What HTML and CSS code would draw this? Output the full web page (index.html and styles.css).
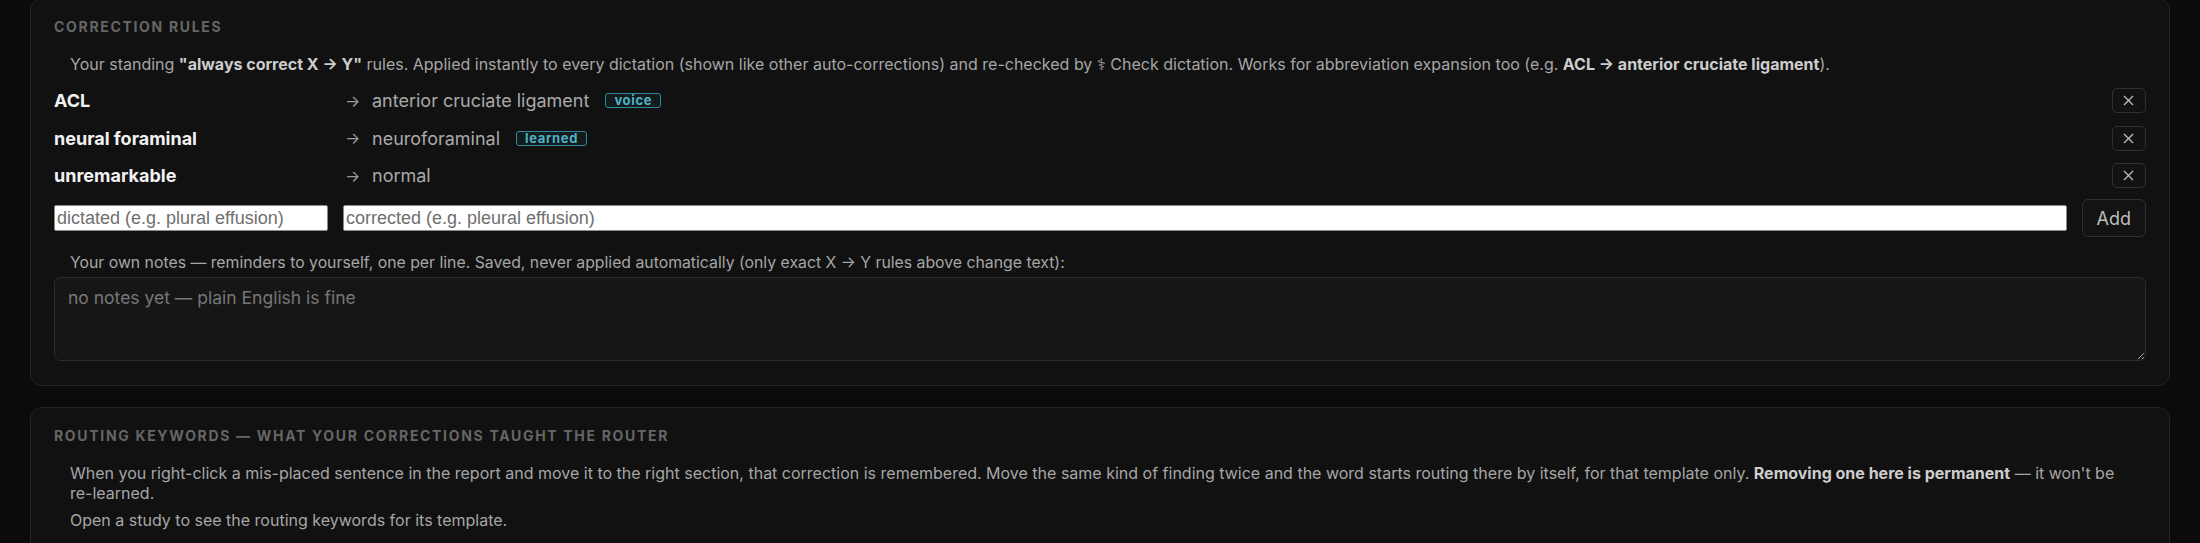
FILE: index.html
```html
<!DOCTYPE html>
<html lang="en">
<head>
<meta charset="utf-8">
<title>Correction rules</title>
<link rel="stylesheet" href="styles.css">
</head>
<body>
<div class="page">
  <section class="card">
    <h2 class="card-title">Correction rules</h2>
    <p class="hint hint-intro">Your standing <b>"always correct X → Y"</b> rules. Applied instantly to every dictation (shown like other auto-corrections) and re-checked by ⚕ Check dictation. Works for abbreviation expansion too (e.g. <b>ACL → anterior cruciate ligament</b>).</p>
    <div class="rules">
      <div class="rule">
        <span class="src">ACL</span>
        <span class="arrow">→</span>
        <span class="dst">anterior cruciate ligament <span class="badge">voice</span></span>
        <button class="del" aria-label="Remove"><svg viewBox="0 0 11 11" width="11" height="11"><path d="M1 1L10 10M10 1L1 10"/></svg></button>
      </div>
      <div class="rule">
        <span class="src">neural foraminal</span>
        <span class="arrow">→</span>
        <span class="dst">neuroforaminal <span class="badge">learned</span></span>
        <button class="del" aria-label="Remove"><svg viewBox="0 0 11 11" width="11" height="11"><path d="M1 1L10 10M10 1L1 10"/></svg></button>
      </div>
      <div class="rule">
        <span class="src">unremarkable</span>
        <span class="arrow">→</span>
        <span class="dst">normal</span>
        <button class="del" aria-label="Remove"><svg viewBox="0 0 11 11" width="11" height="11"><path d="M1 1L10 10M10 1L1 10"/></svg></button>
      </div>
    </div>
    <div class="add-row">
      <input class="field field-src" type="text" placeholder="dictated (e.g. plural effusion)">
      <input class="field field-dst" type="text" placeholder="corrected (e.g. pleural effusion)">
      <button class="add">Add</button>
    </div>
    <p class="hint notes-label">Your own notes — reminders to yourself, one per line. Saved, never applied automatically (only exact X → Y rules above change text):</p>
    <textarea class="notes" placeholder="no notes yet — plain English is fine"></textarea>
  </section>

  <section class="card">
    <h2 class="card-title">Routing keywords — what your corrections taught the router</h2>
    <p class="hint">When you right-click a mis-placed sentence in the report and move it to the right section, that correction is remembered. Move the same kind of finding twice and the word starts routing there by itself, for that template only. <b>Removing one here is permanent</b> — it won't be re-learned.</p>
    <p class="hint">Open a study to see the routing keywords for its template.</p>
  </section>
</div>
</body>
</html>
```

FILE: styles.css
```css
* { box-sizing: border-box; }

html, body {
  margin: 0;
  padding: 0;
  background: #0b0b0b;
  font-family: Inter, "Liberation Sans", sans-serif;
  color: #a8a8a8;
  overflow: hidden;
}

.page {
  padding: 0 30px;
  margin-top: -2px;
}

.card {
  background: #111111;
  border: 1px solid #242424;
  border-radius: 12px;
  padding: 20px 23px 24px;
}

.card + .card {
  margin-top: 21px;
}

.card-title {
  margin: 0 0 19px;
  font-size: 14px;
  line-height: 16px;
  font-weight: 700;
  letter-spacing: 0.12em;
  text-transform: uppercase;
  color: #666666;
}

.hint {
  margin: 0 16px 7px;
  font-size: 16px;
  line-height: 20px;
  color: #a6a6a6;
}

.hint b {
  font-weight: 700;
  color: #cdcdcd;
}

.hint-intro {
  margin-bottom: 14px;
}

.rules {
  display: grid;
  row-gap: 12.5px;
}

.rule {
  display: grid;
  grid-template-columns: 281px 17px 1fr 34.5px;
  column-gap: 10px;
  align-items: center;
  min-height: 25px;
}

.src {
  font-size: 18px;
  font-weight: 700;
  color: #f2f2f2;
}

.arrow {
  font-size: 16px;
  color: #9a9a9a;
}

.dst {
  display: flex;
  align-items: center;
  gap: 16px;
  font-size: 18px;
  color: #a9a9a9;
}

.badge {
  display: inline-block;
  height: 15px;
  padding: 0 8px;
  font-size: 13px;
  line-height: 13px;
  font-weight: 700;
  letter-spacing: 0.05em;
  color: #4fb3c5;
  border: 1px solid #2f8a9b;
  border-radius: 3px;
  background: rgba(60, 170, 190, 0.07);
}

.del {
  width: 34.5px;
  height: 25px;
  padding: 0;
  display: flex;
  align-items: center;
  justify-content: center;
  background: #121212;
  border: 1px solid #303030;
  border-radius: 5px;
  cursor: pointer;
}

.del svg path {
  stroke: #bdbdbd;
  stroke-width: 1.3;
  fill: none;
}

.add-row {
  display: flex;
  align-items: center;
  gap: 15px;
  margin-top: 11px;
}

.field {
  height: 26px;
  padding: 1px 2px;
  font-family: "Liberation Sans", Arial, sans-serif;
  font-size: 18px;
  color: #111;
  background: #ffffff;
  border: 1px solid #8a8a8a;
  border-radius: 2px;
}

.field::placeholder {
  color: #6f6f6f;
}

.field-src {
  width: 274px;
  flex: 0 0 274px;
}

.field-dst {
  flex: 1 1 auto;
  min-width: 0;
}

.add {
  width: 64.5px;
  height: 38px;
  padding: 0;
  font-family: Inter, "Liberation Sans", sans-serif;
  font-size: 18px;
  color: #bdbdbd;
  background: #131313;
  border: 1px solid #303030;
  border-radius: 6px;
  cursor: pointer;
}

.hint.notes-label {
  margin-top: 16px;
  margin-bottom: 4px;
  font-size: 15.8px;
}

.notes {
  display: block;
  width: 100%;
  height: 84px;
  padding: 9px 13px;
  font-family: Inter, "Liberation Sans", sans-serif;
  font-size: 17.5px;
  line-height: 21px;
  color: #cfcfcf;
  background: #161616;
  border: 1px solid #2a2a2a;
  border-radius: 6px;
  resize: vertical;
}

.notes::placeholder {
  color: #777777;
}
```
